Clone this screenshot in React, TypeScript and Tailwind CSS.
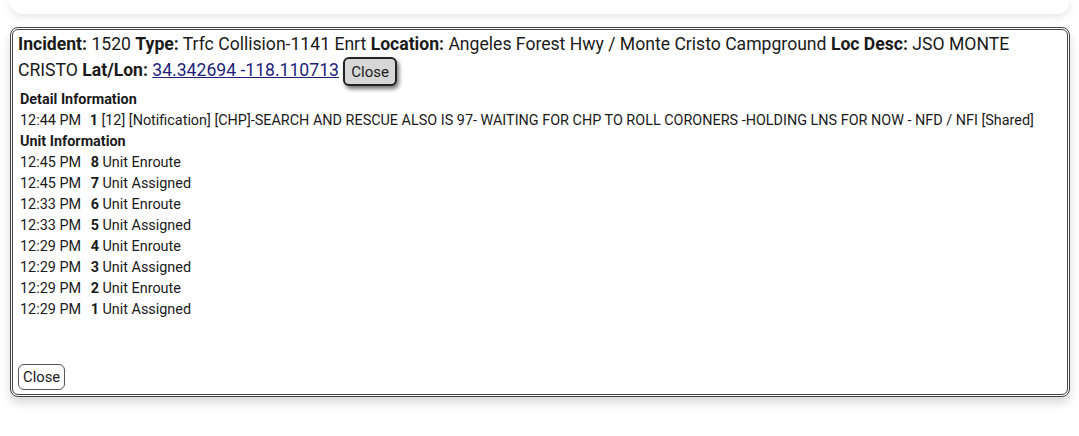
import React from "react";

const units = [
  { time: "12:45 PM", num: 8, text: "Unit Enroute" },
  { time: "12:45 PM", num: 7, text: "Unit Assigned" },
  { time: "12:33 PM", num: 6, text: "Unit Enroute" },
  { time: "12:33 PM", num: 5, text: "Unit Assigned" },
  { time: "12:29 PM", num: 4, text: "Unit Enroute" },
  { time: "12:29 PM", num: 3, text: "Unit Assigned" },
  { time: "12:29 PM", num: 2, text: "Unit Enroute" },
  { time: "12:29 PM", num: 1, text: "Unit Assigned" },
];

export default function App() {
  return (
    <div className="min-h-[436px] bg-white px-[10px] text-[#1a1a1a] font-['Roboto',sans-serif]">
      {/* top card edge */}
      <div className="h-[14px] rounded-b-xl bg-white shadow-[0_2px_8px_rgba(0,0,0,0.12)]" />

      {/* incident dialog */}
      <div className="mt-[13px] mr-[-1px] flex h-[370px] flex-col rounded-lg border-[3px] border-double border-[#444] bg-white px-[5px] pt-[1px] pb-[4px] shadow-[0_6px_10px_rgba(0,0,0,0.15)]">
        <div className="text-[17.6px] leading-[26px]">
          <b>Incident:</b> 1520 <b>Type:</b> Trfc Collision-1141 Enrt <b>Location:</b> Angeles Forest Hwy / Monte Cristo
          Campground <b>Loc Desc:</b> JSO MONTE CRISTO <b>Lat/Lon:</b>{" "}
          <a href="#" className="text-[#1f1f7a] underline">
            34.342694 -118.110713
          </a>{" "}
          <button className="inline-block h-[29px] rounded-md border-2 border-[#222] bg-[#d6d6d6] px-[6px] align-middle text-[15px] leading-[20px] shadow-[2px_3px_4px_rgba(0,0,0,0.55)]">
            Close
          </button>
        </div>

        <div className="mt-[3px] px-[2px] text-[14.4px] leading-[21px]">
          <div className="font-bold">Detail Information</div>
          <div>
            12:44 PM <b className="ml-[5px]">1</b> [12] [Notification] [CHP]-SEARCH AND RESCUE ALSO IS 97- WAITING FOR
            CHP TO ROLL CORONERS -HOLDING LNS FOR NOW - NFD / NFI [Shared]
          </div>
          <div className="font-bold">Unit Information</div>
          {units.map((u) => (
            <div key={u.num}>
              {u.time} <b className="ml-[6px]">{u.num}</b> {u.text}
            </div>
          ))}
        </div>

        <div className="mt-auto">
          <button className="h-[26px] rounded-md border border-[#555] bg-white px-[4px] text-[14.8px] leading-[22px]">
            Close
          </button>
        </div>
      </div>
    </div>
  );
}
